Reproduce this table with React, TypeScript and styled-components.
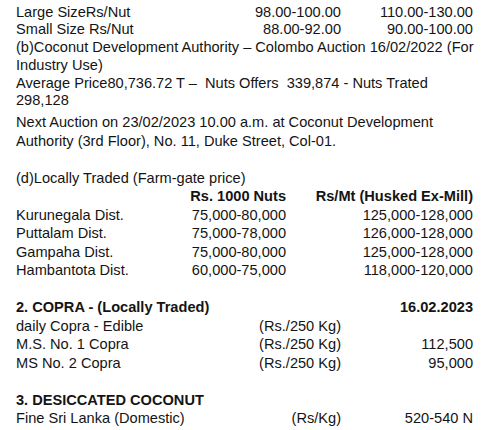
import React from 'react';
import styled, { createGlobalStyle } from 'styled-components';

const GlobalStyle = createGlobalStyle`
  html, body {
    margin: 0;
    padding: 0;
    background: #ffffff;
  }
  body {
    width: 500px;
    height: 430px;
    overflow: hidden;
  }
`;

const prices = [
  { label: 'Large SizeRs/Nut', a: '98.00-100.00', b: '110.00-130.00' },
  { label: 'Small Size Rs/Nut', a: '88.00-92.00', b: '90.00-100.00' },
];

const districts = [
  { name: 'Kurunegala Dist.', nuts: '75,000-80,000', mill: '125,000-128,000' },
  { name: 'Puttalam Dist.', nuts: '75,000-78,000', mill: '126,000-128,000' },
  { name: 'Gampaha Dist.', nuts: '75,000-80,000', mill: '125,000-128,000' },
  { name: 'Hambantota Dist.', nuts: '60,000-75,000', mill: '118,000-120,000' },
];

const copra = [
  { name: 'daily Copra - Edible', unit: '(Rs./250 Kg)', price: '' },
  { name: 'M.S. No. 1 Copra', unit: '(Rs./250 Kg)', price: '112,500' },
  { name: 'MS No. 2 Copra', unit: '(Rs./250 Kg)', price: '95,000' },
];

const App = () => {
  return (
    <Page>
      <GlobalStyle />
      <TopBlock>
        {prices.map((p) => (
          <PriceRow key={p.label}>
            <Cell>{p.label}</Cell>
            <Num>{p.a}</Num>
            <Num>{p.b}</Num>
          </PriceRow>
        ))}
        <Para>
          (b)Coconut Development Authority – Colombo Auction 16/02/2022 (For
          <br />
          Industry Use)
          <br />
          Average Price80,736.72 T –&nbsp; Nuts Offers&nbsp; 339,874 - Nuts Trated
          <br />
          298,128
        </Para>
      </TopBlock>

      <Para $gap={3}>
        Next Auction on 23/02/2023 10.00 a.m. at Coconut Development
        <br />
        Authority (3rd Floor), No. 11, Duke Street, Col-01.
      </Para>

      <Section>
        <Para>(d)Locally Traded (Farm-gate price)</Para>
        <DistrictRow>
          <Cell />
          <Num $bold>Rs. 1000 Nuts</Num>
          <Num $bold>Rs/Mt (Husked Ex-Mill)</Num>
        </DistrictRow>
        {districts.map((d) => (
          <DistrictRow key={d.name}>
            <Cell>{d.name}</Cell>
            <Num>{d.nuts}</Num>
            <Num>{d.mill}</Num>
          </DistrictRow>
        ))}
      </Section>

      <Section>
        <HeadRow>
          <Heading>2. COPRA - (Locally Traded)</Heading>
          <Heading>16.02.2023</Heading>
        </HeadRow>
        {copra.map((c) => (
          <PriceRow key={c.name}>
            <Cell>{c.name}</Cell>
            <Num>{c.unit}</Num>
            <Num>{c.price}</Num>
          </PriceRow>
        ))}
      </Section>

      <Section>
        <Heading>3. DESICCATED COCONUT</Heading>
        <PriceRow>
          <Cell>Fine Sri Lanka (Domestic)</Cell>
          <Num>(Rs/Kg)</Num>
          <Num>520-540 N</Num>
        </PriceRow>
      </Section>
    </Page>
  );
};

const Page = styled.div`
  width: 457px;
  padding: 3.5px 27px 0 16px;
  font-family: 'Liberation Sans', Arial, sans-serif;
  font-size: 14.6px;
  line-height: 18.5px;
  color: #141414;
`;

const TopBlock = styled.div`
  line-height: 17.8px;
`;

const Para = styled.div<{ $gap?: number }>`
  margin-top: ${(p) => p.$gap || 0}px;
  white-space: nowrap;
`;

const Section = styled.div`
  margin-top: 18.5px;
`;

const PriceRow = styled.div`
  display: grid;
  grid-template-columns: 1fr 100px 132px;
`;

const DistrictRow = styled.div`
  display: grid;
  grid-template-columns: 1fr 110px 187px;
`;

const HeadRow = styled.div`
  display: flex;
  justify-content: space-between;
`;

const Cell = styled.span`
  white-space: nowrap;
`;

const Num = styled.span<{ $bold?: boolean }>`
  text-align: right;
  white-space: nowrap;
  font-weight: ${(p) => (p.$bold ? 700 : 400)};
`;

const Heading = styled.span`
  font-weight: 700;
  white-space: nowrap;
`;

export default App;
